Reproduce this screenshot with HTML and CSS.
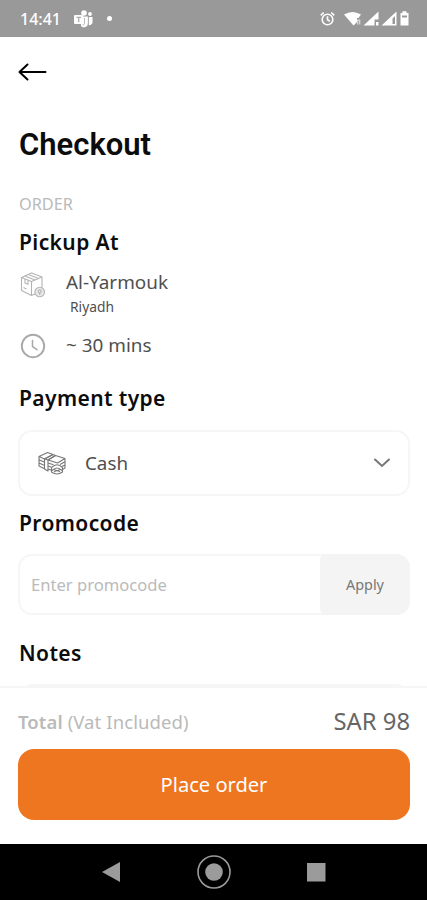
FILE: index.html
```html
<!DOCTYPE html>
<html lang="en">
<head>
    <meta charset="UTF-8">
    <meta name="viewport" content="width=device-width, initial-scale=1.0">
    <title>Checkout</title>
    <link rel="stylesheet" href="styles.css">
</head>
<body>
    <div class="screen">
        <div class="status-bar">
            <span class="time">14:41</span>
            <svg class="teams" width="20" height="18" viewBox="0 0 20 18" fill="#fff">
                <circle cx="10" cy="3" r="2.8"/>
                <circle cx="16" cy="4" r="1.9"/>
                <path d="M7 6.5h7v7a4 4 0 0 1-7 2.5z"/>
                <path d="M14.700 7H18.500v5.500a3 3 0 0 1-3.800 2.500z"/>
                <rect x="0" y="5" width="9" height="9" rx="1"/>
                <path d="M2.500 7.300h4.500M4.750 7.300v5" stroke="#aaa" stroke-width="1.200" fill="none"/>
                <path d="M10.500 8v5.500q0 1.500-2 1.500M14.300 7v7.500" stroke="#aaa" stroke-width=".8" fill="none"/>
            </svg>
            <span class="dot"></span>
            <svg class="signals" width="92" height="20" viewBox="0 0 92 20" fill="#fff">
                <g fill="none" stroke="#fff" stroke-width="1.600">
                    <circle cx="9.500" cy="10.500" r="5.300"/>
                    <path d="M9.500 7.300v3.500l2.300 1.400M2.700 6.300l3-2.600M16.300 6.300l-3-2.600"/>
                </g>
                <path d="M26 5.500q8.500-5 17 0l-2.500 3.500h-1.500v4l-3.500 3.500z"/>
                <path d="M39.700 15.500v-4.500h2v4.500" fill="none" stroke="#ddd" stroke-width="1.200"/>
                <path d="M60.500 2.500v8h-4v6H45.500zM58 13h2.500v3.500H58z"/>
                <path fill-rule="evenodd" d="M78.500 2.500v14H63.500zM74.500 9.500v5.500h2.500V7z"/>
                <path fill-rule="evenodd" d="M82.500 4h2V2.200h4V4h2v12.500h-8zM84 6.500v2h5v-2z"/>
            </svg>
        </div>

        <div class="header">
            <svg width="30" height="20" viewBox="0 0 30 20" fill="none" stroke="#000" stroke-width="2" stroke-linecap="round" stroke-linejoin="round">
                <path d="M27.500 10H2M9.500 2.500L1.500 10l8 7.500"/>
            </svg>
        </div>

        <div class="content">
            <h1>Checkout</h1>
            <div class="section-label">ORDER</div>
            <h2 class="pickup-title">Pickup At</h2>
            <div class="info-row">
                <svg class="info-icon" width="26" height="26" viewBox="0 0 26 26" fill="none" stroke="#b4b4b4" stroke-width="1.100" stroke-linejoin="round">
                    <path d="M1.500 5.500L11.500 1 22 5 11.500 9.500zM1.500 5.500V18.500l10 5V9.500M22 5v12M11.500 23.500l4.500-2"/>
                    <path d="M4.800 4L15 8M8.200 2.500l10.300 4M5 7v4l3 1.300V8.300M3.500 15.500l3 1.500"/>
                    <circle cx="19.700" cy="20" r="4.800" fill="#e9e9e9"/>
                    <circle cx="19.700" cy="19.300" r="1.600"/>
                    <path d="M19.700 21v2"/>
                </svg>
                <div>
                    <div class="info-text">Al-Yarmouk</div>
                    <div class="info-sub">Riyadh</div>
                </div>
            </div>
            <div class="info-row time-row">
                <svg class="info-icon" width="26" height="26" viewBox="0 0 26 26" fill="none" stroke="#a8a8a8" stroke-width="1.900" stroke-linecap="round">
                    <circle cx="13" cy="13" r="11.200"/>
                    <path d="M12.500 7.500v6l4.500 3.200" stroke-width="1.500"/>
                </svg>
                <div class="info-text">~ 30 mins</div>
            </div>

            <h2 class="payment-title">Payment type</h2>
            <div class="select">
                <svg width="28" height="24" viewBox="0 0 28 24" fill="none" stroke="#777" stroke-width="1.100" stroke-linejoin="round">
                    <path d="M1 5.500L9.500 1.500 15 3.500 6.500 8zM1 5.500v9.500l5 2.500M1 8.700l5 2.400M1 11.900l5 2.400"/>
                    <path d="M15 3.500l2.500 1L10 9v11L6.500 18V8zM6.500 8L10 9"/>
                    <path d="M10 9l7.500-4.500L27 7.500 19.500 12zM27 7.500v9.500l-2.500 1.500M27 10.700l-5 2.800M27 13.900l-3 1.700"/>
                    <path d="M10 12l5.500 1.800M10 15l3.500 1.200M10 18l3.500 1.200"/>
                    <path d="M13.500 16.500q5.500-5.500 11 0M14 19.500q5-5 10 0M13.500 16.500v4.500q5.500 4 11 0v-4.500M16 18.500q3 2 6 0M16 21q3-2.500 6 0"/>
                </svg>
                <span class="select-value">Cash</span>
                <svg class="chevron" width="18" height="12" viewBox="0 0 18 12" fill="none" stroke="#777" stroke-width="2" stroke-linecap="round">
                    <path d="M2 2.500l7 6.500 7-6.500"/>
                </svg>
            </div>

            <h2 class="promo-title">Promocode</h2>
            <div class="promo">
                <span class="placeholder">Enter promocode</span>
                <button class="apply">Apply</button>
            </div>

            <h2 class="notes-title">Notes</h2>
            <div class="notes"></div>
        </div>

        <div class="footer">
            <div class="total">
                <span class="total-label"><b>Total</b> (Vat Included)</span>
                <span class="total-price">SAR 98</span>
            </div>
            <button class="place-order">Place order</button>
        </div>

        <div class="nav-bar">
            <svg width="427" height="56" viewBox="0 0 427 56" fill="#9b9b9b">
                <path d="M102 28l18-10v20z"/>
                <circle cx="214" cy="28" r="8.800"/>
                <circle cx="214" cy="28" r="16" fill="none" stroke="#9b9b9b" stroke-width="1.600"/>
                <rect x="307" y="19" width="18.500" height="18.500"/>
            </svg>
        </div>
    </div>
</body>
</html>
```
FILE: styles.css
```css
:root {
    --primary-color: #ee7620;
    --text-color: #4f4f4f;
    --light-text: #bababa;
    --border-color: #f6f6f6;
}
* {
    box-sizing: border-box;
}
body {
    margin: 0;
    font-family: 'Noto Sans', sans-serif;
    color: var(--text-color);
    background-color: white;
}
.screen {
    width: 427px;
    height: 900px;
    display: flex;
    flex-direction: column;
    overflow: hidden;
}
.status-bar {
    height: 37px;
    flex: none;
    display: flex;
    align-items: center;
    padding: 0 17px 0 20px;
    background-color: #999;
}
.time {
    width: 54px;
    color: white;
    font-size: 16px;
    font-weight: 500;
    white-space: nowrap;
}
.dot {
    width: 5px;
    height: 5px;
    margin-left: 13px;
    border-radius: 50%;
    background-color: white;
}
.signals {
    margin-left: auto;
}
.header {
    height: 69px;
    flex: none;
    display: flex;
    align-items: center;
    padding-left: 18px;
}
.content {
    flex: 1;
    min-height: 0;
    overflow: hidden;
    padding: 19px 17px 0 18px;
}
h1 {
    margin: 0 0 27px;
    padding-left: 1px;
    font-family: Roboto, sans-serif;
    font-size: 31px;
    line-height: 40px;
    font-weight: 600;
    color: #0c0c0c;
}
h2 {
    margin: 0;
    padding-left: 1px;
    font-size: 21px;
    line-height: 30px;
    font-weight: 600;
    letter-spacing: 0.4px;
    color: #0c0c0c;
}
.section-label {
    margin-bottom: 11px;
    padding-left: 1px;
    font-size: 16.3px;
    line-height: 24px;
    color: var(--light-text);
}
.pickup-title {
    margin-bottom: 12px;
}
.info-row {
    display: flex;
    align-items: flex-start;
    gap: 20px;
    padding-left: 2px;
}
.info-icon {
    margin-top: 3px;
}
.info-text {
    font-size: 18.9px;
    line-height: 26px;
}
.info-sub {
    margin-top: 2px;
    padding-left: 4px;
    font-size: 13.8px;
    line-height: 20px;
}
.time-row {
    margin-top: 15px;
}
.time-row .info-icon {
    margin-top: 1px;
}
.payment-title {
    margin: 24px 0 17px;
}
.select {
    height: 66px;
    display: flex;
    align-items: center;
    padding: 0 17px 0 18px;
    border: 2px solid var(--border-color);
    border-radius: 14px;
}
.select-value {
    margin-left: 19px;
    font-size: 18.8px;
}
.chevron {
    margin-left: auto;
}
.promo-title {
    margin: 12px 0 16px;
}
.promo {
    height: 61px;
    display: flex;
    align-items: center;
    justify-content: space-between;
    padding-left: 11px;
    border: 2px solid var(--border-color);
    border-radius: 14px;
}
.placeholder {
    font-size: 16.6px;
    color: var(--light-text);
}
.apply {
    width: 90px;
    height: 61px;
    margin-right: -2px;
    padding-bottom: 2px;
    border: none;
    border-radius: 6px 14px 14px 6px;
    background-color: #f4f4f4;
    font-family: inherit;
    font-size: 14.4px;
    color: #777;
}
.notes-title {
    margin: 23px 0 16px;
}
.notes {
    height: 90px;
    border: 2px solid var(--border-color);
    border-radius: 14px;
}
.footer {
    height: 158px;
    flex: none;
    padding: 18px 17px 0 18px;
    border-top: 2px solid var(--border-color);
}
.total {
    height: 43px;
    display: flex;
    justify-content: space-between;
    line-height: 32px;
}
.total-label {
    font-size: 18.5px;
    letter-spacing: 0.1px;
    color: var(--light-text);
}
.total-label b {
    font-weight: 600;
}
.total-price {
    font-size: 23.8px;
    line-height: 31px;
    color: #666;
}
.place-order {
    width: 100%;
    height: 71px;
    border: none;
    border-radius: 16px;
    background-color: var(--primary-color);
    font-family: inherit;
    font-size: 20.1px;
    color: white;
}
.nav-bar {
    height: 56px;
    flex: none;
    background-color: black;
}
```
